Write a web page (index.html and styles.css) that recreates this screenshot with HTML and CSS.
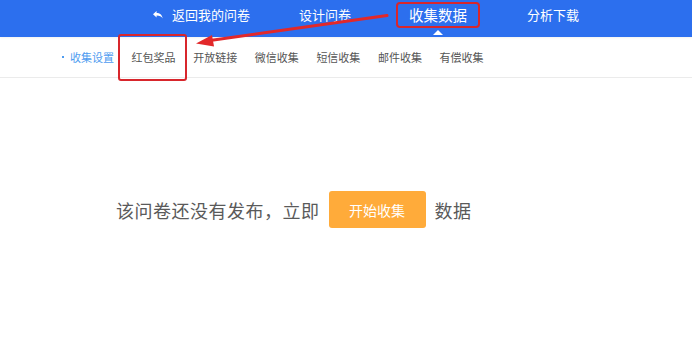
FILE: index.html
```html
<!DOCTYPE html>
<html lang="zh-CN">
<head>
<meta charset="utf-8">
<title>收集数据</title>
<link rel="stylesheet" href="styles.css">
</head>
<body>
<header class="topbar">
  <nav class="topnav">
    <a class="topnav-item back">
      <svg class="back-icon" width="10" height="8" viewBox="0 0 10 8"><path d="M0 3.2 L3.6 0 L3.6 2 C6.8 2 9 3.6 9.6 7.4 C8.4 5.4 6.6 4.6 3.6 4.6 L3.6 6.4 Z" fill="#fff"/></svg>
      <span>返回我的问卷</span>
    </a>
    <a class="topnav-item">设计问卷</a>
    <a class="topnav-item active">收集数据</a>
    <a class="topnav-item">分析下载</a>
  </nav>
</header>
<nav class="subnav">
  <a class="subnav-item current">收集设置</a>
  <a class="subnav-item marked">红包奖品</a>
  <a class="subnav-item">开放链接</a>
  <a class="subnav-item">微信收集</a>
  <a class="subnav-item">短信收集</a>
  <a class="subnav-item">邮件收集</a>
  <a class="subnav-item">有偿收集</a>
</nav>
<main class="empty">
  <span class="empty-text">该问卷还没有发布，立即</span>
  <button class="start-btn">开始收集</button>
  <span class="empty-text">数据</span>
</main>
<svg class="annot-arrow" width="692" height="80" viewBox="0 0 692 80">
  <line x1="387" y1="15.5" x2="210" y2="40.5" stroke="#e2282a" stroke-width="3" stroke-linecap="round"/>
  <polygon points="196,43.5 212,35 214,46.5" fill="#e2282a"/>
</svg>
</body>
</html>
```
FILE: styles.css
```css
* { box-sizing: border-box; }
html, body { margin: 0; padding: 0; background: #fff; }
body {
  font-family: "Noto Sans CJK SC", "Noto Sans", sans-serif;
  position: relative;
  width: 692px;
  height: 345px;
  overflow: hidden;
}
a { text-decoration: none; cursor: pointer; }

.topbar {
  height: 37px;
  background: #2c6fee;
  box-shadow: 0 1px 2px rgba(0,0,0,0.06);
}
.topnav {
  display: flex;
  align-items: flex-start;
  padding-left: 151px;
  padding-top: 2px;
  gap: 45px;
}
.topnav-item {
  color: #fff;
  font-size: 13px;
  line-height: 26px;
  padding: 0 2px;
  display: flex;
  align-items: center;
}
.topnav-item.back { gap: 9px; }
.back-icon { display: block; margin-top: -1px; }
.topnav-item.active {
  position: relative;
  font-size: 14.5px;
  line-height: 22px;
  padding: 0 11px 0 11px;
  border: 2px solid #d8262c;
  border-radius: 4px;
  margin-left: -2px;
}
.topnav-item.active::after {
  content: "";
  position: absolute;
  left: 50%;
  top: 26px;
  margin-left: -5px;
  border-left: 5px solid transparent;
  border-right: 5px solid transparent;
  border-bottom: 5px solid #fff;
}

.subnav {
  display: flex;
  align-items: center;
  height: 41px;
  padding-left: 70px;
  gap: 17.6px;
  border-bottom: 1px solid #ebebeb;
}
.subnav-item {
  position: relative;
  font-size: 11px;
  color: #555;
  line-height: 16px;
}
.subnav-item.current { color: #4f9cf0; }
.subnav-item.current::before {
  content: "";
  position: absolute;
  left: -8px;
  top: 7px;
  width: 2px;
  height: 2px;
  background: #4f9cf0;
}
.subnav-item.marked::before {
  content: "";
  position: absolute;
  left: -14px;
  right: -11px;
  top: -15px;
  bottom: -16px;
  border: 2px solid #d8262c;
  border-radius: 3px;
}

.empty {
  display: flex;
  align-items: center;
  gap: 9px;
  padding-left: 116px;
  margin-top: 113px;
}
.empty-text {
  font-size: 18px;
  color: #5a5a5a;
  letter-spacing: 0.5px;
}
.start-btn {
  font-family: inherit;
  font-size: 14px;
  color: #fff;
  background: #ffab3a;
  border: none;
  border-radius: 3px;
  width: 97px;
  height: 37px;
  padding: 0;
}

.annot-arrow {
  position: absolute;
  left: 0;
  top: 0;
  pointer-events: none;
}
```
